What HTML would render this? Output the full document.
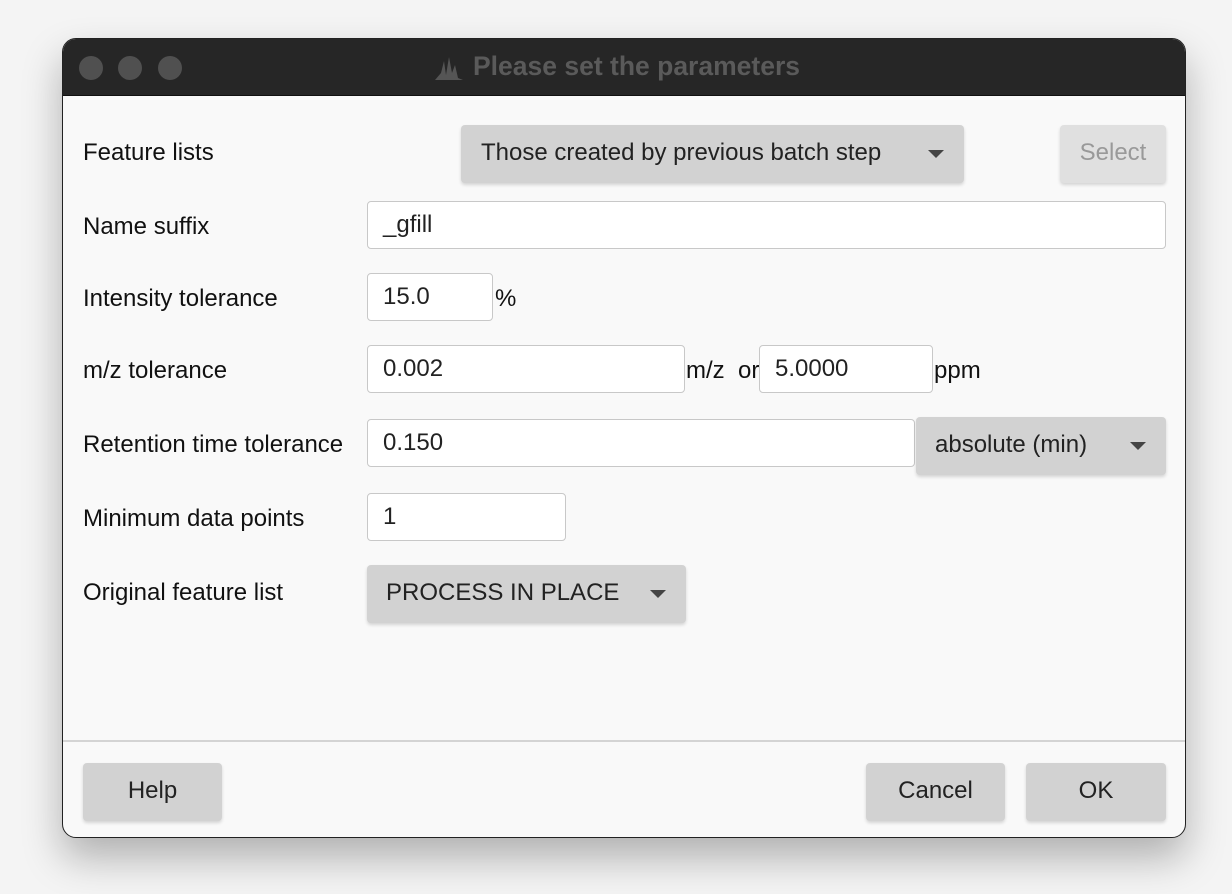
<!DOCTYPE html>
<html><head><style>
body{margin:0;width:1232px;height:894px;background:#f4f4f4;font-family:"Liberation Sans",sans-serif;position:relative;overflow:hidden}
.win{position:absolute;left:62px;top:38px;width:1122px;height:798px;border:1px solid #222;border-radius:14px;background:#f9f9f9;overflow:hidden;box-shadow:0 20px 40px rgba(0,0,0,.28)}
.title{position:absolute;left:0;top:0;right:0;height:56px;background:#262626;border-bottom:1px solid #111}
.dot{position:absolute;top:17px;width:24px;height:24px;border-radius:50%;background:#505050}
.tt{position:absolute;left:410px;top:12px;color:#5a5a5a;font-weight:bold;font-size:26.5px}
.a{position:absolute;font-size:24px;color:#111;white-space:nowrap}
.lab{left:20px}
.in{position:absolute;background:#fff;border:1px solid #c8c8c8;border-radius:4px;height:48px;box-sizing:border-box;padding-left:15px;font-size:24px;line-height:46px;color:#222}
.btn{position:absolute;background:#d2d2d2;border-radius:4px;box-shadow:0 2px 3px rgba(0,0,0,.15);font-size:24px;line-height:56px;color:#222;box-sizing:border-box}
.arr{position:absolute;right:20px;top:25px;width:0;height:0;border-left:8px solid transparent;border-right:8px solid transparent;border-top:8px solid #444}
</style></head><body>
<div class="win">
<div class="title">
<div class="dot" style="left:16px"></div><div class="dot" style="left:55px"></div><div class="dot" style="left:95px"></div>
<svg style="position:absolute;left:372px;top:14px" width="28" height="28" viewBox="0 0 28 28"><path d="M0 27 L6 20 L9 8 L11 22 L14 4 L17 20 L20 12 L23 25 L28 27Z" fill="#555"/></svg>
<div class="tt">Please set the parameters</div>
</div>
<div class="a lab" style="top:100px">Feature lists</div>
<div class="btn" style="left:398px;top:86px;width:503px;height:58px;padding-left:20px">Those created by previous batch step<div class="arr"></div></div>
<div class="btn" style="left:997px;top:86px;width:106px;height:58px;text-align:center;color:#999;background:#e0e0e0">Select</div>
<div class="a lab" style="top:174px">Name suffix</div>
<div class="in" style="left:304px;top:162px;width:799px">_gfill</div>
<div class="a lab" style="top:246px">Intensity tolerance</div>
<div class="in" style="left:304px;top:234px;width:126px">15.0</div>
<div class="a" style="left:432px;top:246px">%</div>
<div class="a lab" style="top:318px">m/z tolerance</div>
<div class="in" style="left:304px;top:306px;width:318px">0.002</div>
<div class="a" style="left:623px;top:318px">m/z&nbsp; or</div>
<div class="in" style="left:696px;top:306px;width:174px">5.0000</div>
<div class="a" style="left:871px;top:318px">ppm</div>
<div class="a lab" style="top:392px">Retention time tolerance</div>
<div class="in" style="left:304px;top:380px;width:548px">0.150</div>
<div class="btn" style="left:853px;top:378px;width:250px;height:58px;padding-left:19px">absolute (min)<div class="arr"></div></div>
<div class="a lab" style="top:466px">Minimum data points</div>
<div class="in" style="left:304px;top:454px;width:199px">1</div>
<div class="a lab" style="top:540px">Original feature list</div>
<div class="btn" style="left:304px;top:526px;width:319px;height:58px;padding-left:19px">PROCESS IN PLACE<div class="arr"></div></div>
<div style="position:absolute;left:0;right:0;top:701px;height:2px;background:#d4d4d4"></div>
<div class="btn" style="left:20px;top:724px;width:139px;height:58px;text-align:center">Help</div>
<div class="btn" style="left:803px;top:724px;width:139px;height:58px;text-align:center">Cancel</div>
<div class="btn" style="left:963px;top:724px;width:140px;height:58px;text-align:center">OK</div>
</div>
</body></html>
